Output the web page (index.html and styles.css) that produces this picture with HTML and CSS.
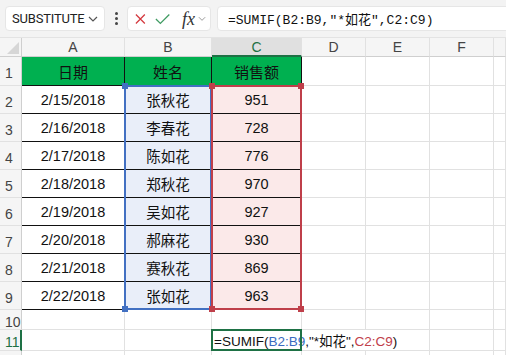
FILE: index.html
```html
<!doctype html>
<html>
<head>
  <meta charset="UTF-8" />
  <title>SUMIF</title>
  <link rel="stylesheet" href="styles.css">
</head>
<body>
  <div class="toolbar">
    <div class="namebox">
      <span class="name">SUBSTITUTE</span>
      <svg class="chev" width="10" height="6" viewBox="0 0 10 6"><polyline points="1,1 5,5 9,1" fill="none" stroke="#555" stroke-width="1.2"/></svg>
    </div>
    <div class="dots"><i></i><i></i><i></i></div>
    <div class="fnbox">
      <svg width="12" height="12" viewBox="0 0 12 12"><path d="M1 1 L11 11 M11 1 L1 11" stroke="#d4393f" stroke-width="1.4" fill="none"/></svg>
      <svg width="17" height="12" viewBox="0 0 17 12"><polyline points="1,6 6,11 16,1" fill="none" stroke="#3f9b62" stroke-width="1.4"/></svg>
      <span class="fx">fx</span>
      <svg class="chev" width="9" height="6" viewBox="0 0 9 6"><polyline points="1,1 4.5,4.5 8,1" fill="none" stroke="#999" stroke-width="1.1"/></svg>
    </div>
    <div class="formula">=SUMIF(B2:B9,"*如花",C2:C9)</div>
  </div>

  <div class="sheet">
    <div class="row">
      <div class="c corner"><span class="tri"></span></div>
      <div class="c ch">A</div><div class="c ch">B</div><div class="c ch active">C</div>
      <div class="c ch">D</div><div class="c ch">E</div><div class="c ch">F</div><div class="c ch"></div>
    </div>
    <div class="row">
      <div class="c rh">1</div>
      <div class="c head">日期</div><div class="c head">姓名</div><div class="c head">销售额</div>
      <div class="c"></div><div class="c"></div><div class="c"></div><div class="c"></div>
    </div>
    <div class="row">
      <div class="c rh">2</div>
      <div class="c data">2/15/2018</div><div class="c data nb">张秋花</div><div class="c data nc">951</div>
      <div class="c"></div><div class="c"></div><div class="c"></div><div class="c"></div>
    </div>
    <div class="row">
      <div class="c rh">3</div>
      <div class="c data">2/16/2018</div><div class="c data nb">李春花</div><div class="c data nc">728</div>
      <div class="c"></div><div class="c"></div><div class="c"></div><div class="c"></div>
    </div>
    <div class="row">
      <div class="c rh">4</div>
      <div class="c data">2/17/2018</div><div class="c data nb">陈如花</div><div class="c data nc">776</div>
      <div class="c"></div><div class="c"></div><div class="c"></div><div class="c"></div>
    </div>
    <div class="row">
      <div class="c rh">5</div>
      <div class="c data">2/18/2018</div><div class="c data nb">郑秋花</div><div class="c data nc">970</div>
      <div class="c"></div><div class="c"></div><div class="c"></div><div class="c"></div>
    </div>
    <div class="row">
      <div class="c rh">6</div>
      <div class="c data">2/19/2018</div><div class="c data nb">吴如花</div><div class="c data nc">927</div>
      <div class="c"></div><div class="c"></div><div class="c"></div><div class="c"></div>
    </div>
    <div class="row">
      <div class="c rh">7</div>
      <div class="c data">2/20/2018</div><div class="c data nb">郝麻花</div><div class="c data nc">930</div>
      <div class="c"></div><div class="c"></div><div class="c"></div><div class="c"></div>
    </div>
    <div class="row">
      <div class="c rh">8</div>
      <div class="c data">2/21/2018</div><div class="c data nb">赛秋花</div><div class="c data nc">869</div>
      <div class="c"></div><div class="c"></div><div class="c"></div><div class="c"></div>
    </div>
    <div class="row">
      <div class="c rh">9</div>
      <div class="c data">2/22/2018</div><div class="c data nb">张如花</div><div class="c data nc">963</div>
      <div class="c"></div><div class="c"></div><div class="c"></div><div class="c"></div>
    </div>
    <div class="row">
      <div class="c rh">10</div>
      <div class="c"></div><div class="c"></div><div class="c"></div>
      <div class="c"></div><div class="c"></div><div class="c"></div><div class="c"></div>
    </div>
    <div class="row">
      <div class="c rh cur">11</div>
      <div class="c"></div><div class="c"></div>
      <div class="c edit"><span class="edit-text">=SUMIF(<b class="rb">B2:B9</b>,"*如花",<b class="rc">C2:C9</b>)</span></div>
      <div class="c"></div><div class="c"></div><div class="c"></div><div class="c"></div>
    </div>
    <div class="row">
      <div class="c rh"></div>
      <div class="c"></div><div class="c"></div><div class="c"></div>
      <div class="c"></div><div class="c"></div><div class="c"></div><div class="c"></div>
    </div>

    <!-- reference outlines drawn while editing the formula -->
    <div class="ref ref-b"><i class="h tl"></i><i class="h bl"></i></div>
    <div class="ref ref-c"><i class="h tl"></i><i class="h tr"></i><i class="h bl"></i><i class="h br"></i></div>
    <div class="cursor"></div>
  </div>
</body>
</html>
```

FILE: styles.css
```css
html, body {
  margin: 0;
  padding: 0;
  background: #fff;
  font-family: "Liberation Sans", "Noto Sans CJK SC", sans-serif;
  color: #222;
  overflow: hidden;
}
.toolbar {
  height: 37px;
  background: #f3f3f3;
  border-bottom: 1px solid #e3e3e3;
  display: flex;
  align-items: center;
  padding-left: 5px;
}
.namebox, .fnbox, .formula {
  height: 25px;
  background: #fff;
  border: 1px solid #e6e6e6;
  border-radius: 4px;
  box-sizing: border-box;
  display: flex;
  align-items: center;
}
.namebox {
  width: 100px;
  padding: 0 6px;
  justify-content: space-between;
}
.name {
  font-family: "Roboto", sans-serif;
  font-size: 13px;
  color: #222;
  letter-spacing: -0.2px;
}
.dots {
  width: 22px;
  display: flex;
  flex-direction: column;
  align-items: center;
  gap: 2px;
}
.dots i {
  width: 3px;
  height: 3px;
  background: #444;
  border-radius: 50%;
}
.fnbox {
  width: 84px;
  padding: 0 4px 0 7px;
  gap: 10px;
}
.fnbox svg:nth-child(2) {
  margin-left: -1px;
}
.fx {
  font-family: "Liberation Serif", serif;
  font-style: italic;
  font-size: 18px;
  color: #333;
  margin-left: 2px;
  margin-right: -7px;
  line-height: 1;
}
.formula {
  flex: 1;
  margin-left: 6px;
  margin-right: -6px;
  padding-left: 10px;
  font-family: "Liberation Mono", "Noto Sans CJK SC", monospace;
  font-size: 13px;
  color: #111;
}

.sheet {
  position: relative;
  display: grid;
  grid-template-columns: 22px 103px 87px 90px 64px 64px 64px 1fr;
  grid-template-rows: 19px 29px repeat(8, 28px) 20px 21px 1fr;
  height: 317px;
}
.row {
  display: contents;
}
.c {
  box-sizing: border-box;
  border-right: 1px solid #e1e1e1;
  border-bottom: 1px solid #e1e1e1;
  display: flex;
  align-items: center;
  justify-content: center;
  font-size: 14px;
  white-space: nowrap;
}
.ch {
  background: #f5f5f5;
  border-bottom-color: #cfcfcf;
  color: #444;
  font-size: 14px;
}
.ch.active {
  background: #e0e0e0;
  color: #1e7145;
  border-bottom: 2px solid #1e7145;
}
.corner {
  background: #f5f5f5;
  border-bottom-color: #cfcfcf;
  border-right-color: #cfcfcf;
  position: relative;
}
.tri {
  position: absolute;
  right: 2px;
  bottom: 2px;
  border-left: 12px solid transparent;
  border-bottom: 12px solid #d6d6d6;
}
.rh {
  background: #f5f5f5;
  border-right-color: #cfcfcf;
  color: #444;
  font-size: 14px;
  justify-content: flex-start;
  padding-left: 5px;
  padding-top: 4px;
}
.rh.cur {
  color: #1e7145;
  border-right: 2px solid #1e7145;
}
.head {
  background: #00b050;
  border-right-color: #111;
  border-bottom-color: #111;
  font-size: 15px;
  color: #111;
}
.data {
  border-bottom-color: #111;
  color: #111;
  font-size: 14.5px;
}
.data.nb {
  background: #e9eef9;
}
.data.nc {
  background: #fbe9e9;
}
.edit {
  justify-content: flex-start;
  overflow: visible;
  position: relative;
  z-index: 3;
}
.edit-text {
  background: #fff;
  padding: 0 4px 0 2px;
  font-size: 13.5px;
  color: #111;
}
.edit-text b {
  font-weight: normal;
}
.rb {
  color: #3a6bc0;
}
.rc {
  color: #c0404a;
}

/* overlays sit in a grid area but out of auto-placement */
.ref, .cursor {
  position: absolute;
  top: -1px;
  left: -1px;
  right: 0;
  bottom: 0;
  box-sizing: border-box;
  border: 2px solid;
}
.ref-b {
  grid-column: 3 / 4;
  grid-row: 3 / 11;
  border-color: #4270c2;
  z-index: 1;
}
.ref-c {
  grid-column: 4 / 5;
  grid-row: 3 / 11;
  border-color: #bf3f4a;
  z-index: 2;
}
.h {
  position: absolute;
  width: 6px;
  height: 6px;
}
.ref-b .h { background: #4270c2; }
.ref-c .h { background: #bf3f4a; }
.h.tl { left: -4px; top: -4px; }
.h.tr { right: -4px; top: -4px; }
.h.bl { left: -4px; bottom: -4px; }
.h.br { right: -4px; bottom: -4px; }

.cursor {
  grid-column: 4 / 5;
  grid-row: 12 / 13;
  border-color: #1e7145;
  z-index: 4;
}
```
